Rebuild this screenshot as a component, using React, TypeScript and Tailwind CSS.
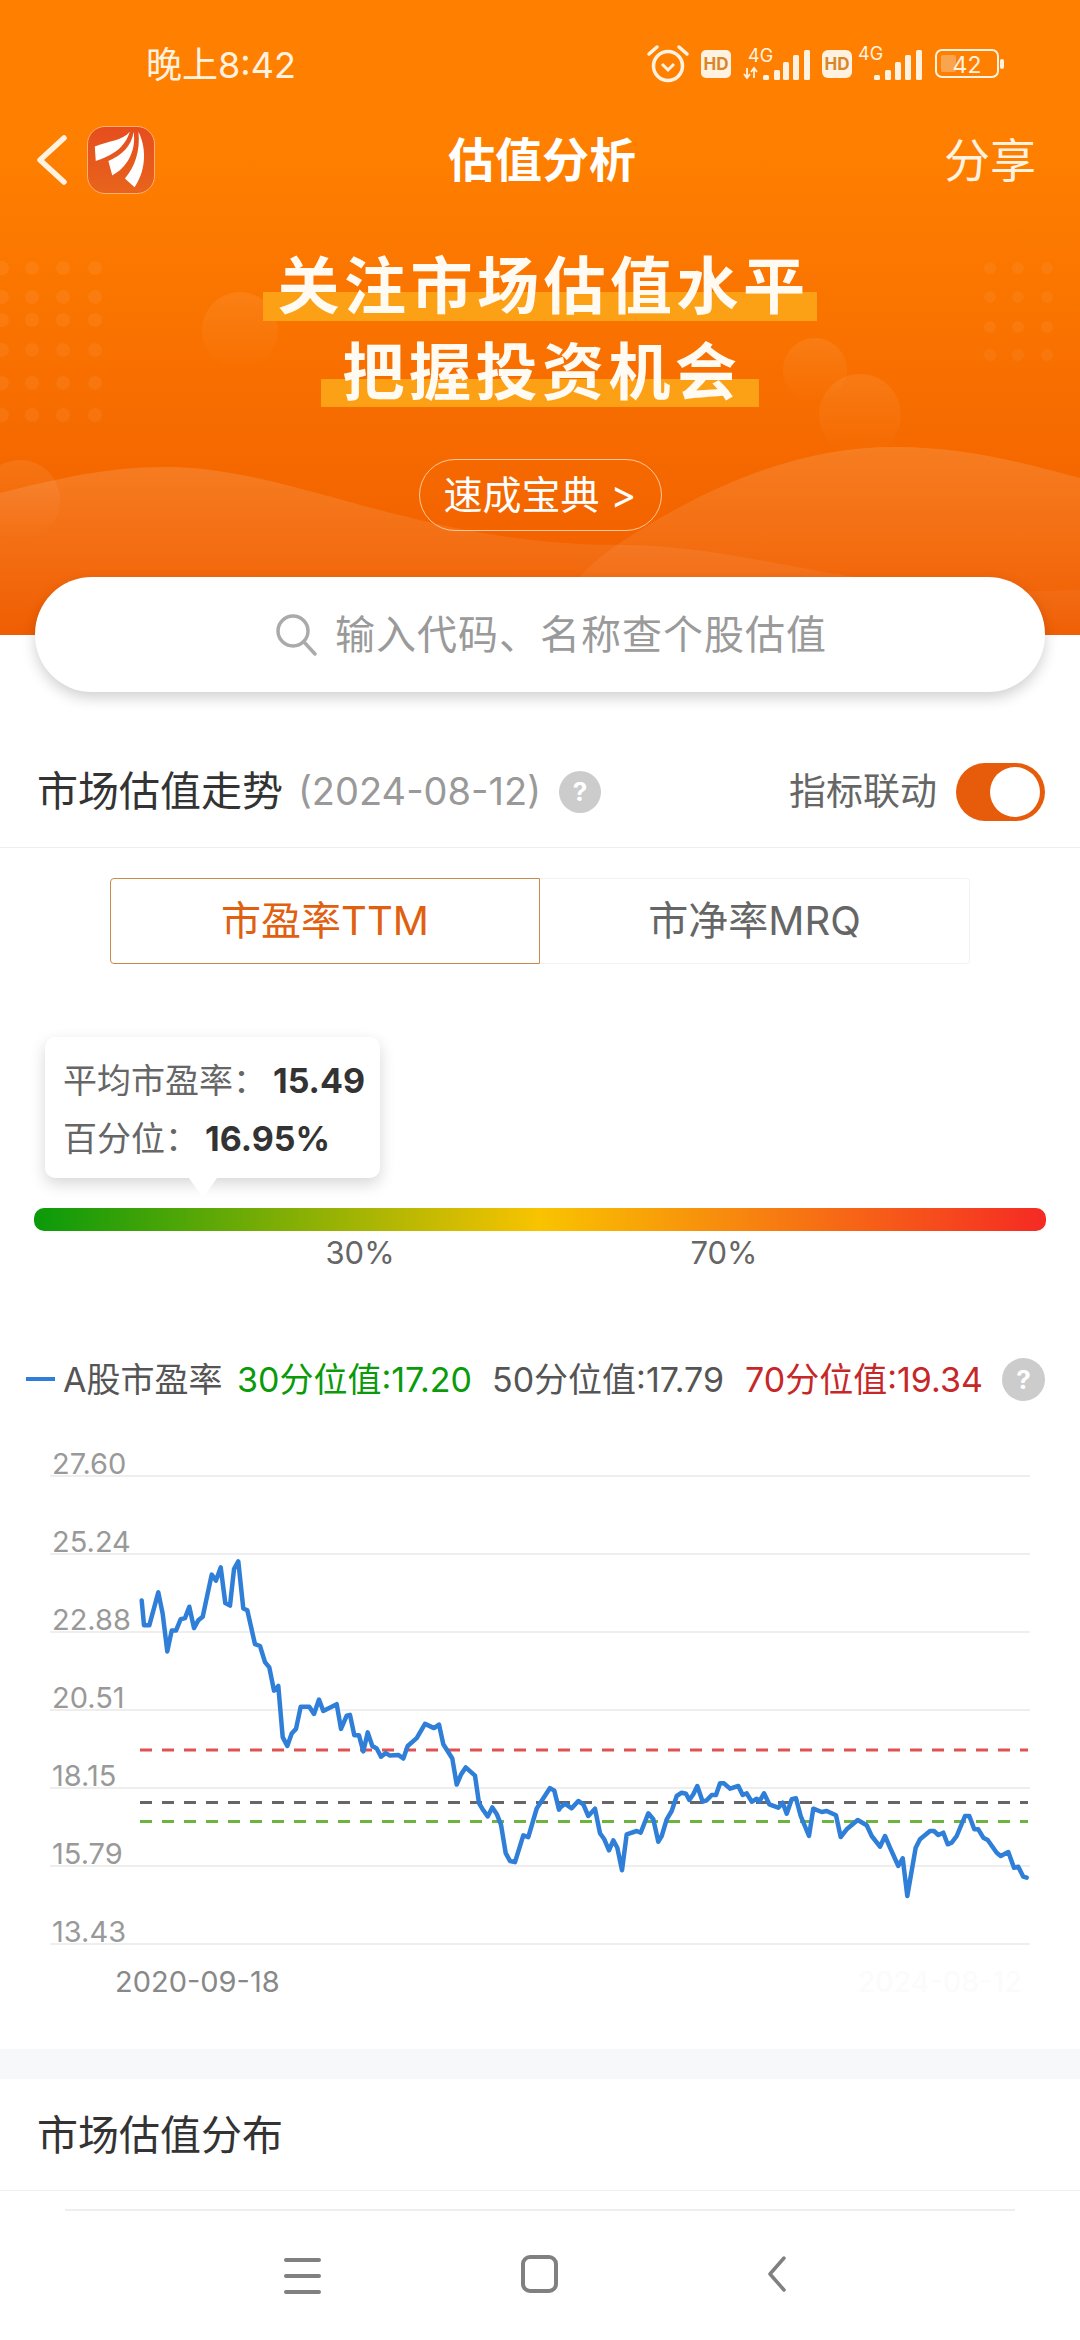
import React from "react";

const a: number[][] = [[65,503],[72,572],[88,572],[115,480],[128,540],[142,645],[155,587],[168,587],[182,555],[195,552],[208,520],[222,580],[235,558],[248,548],[275,430],[288,447],[302,410],[316,510],[330,517],[342,415],[355,393],[370,525],[382,530],[405,625],[420,630],[435,675],[448,690],[462,755],[475,742],[488,885],[502,910],[515,875],[528,862],[542,800],[568,800],[582,820],[597,780],[610,812],[650,793],[663,862],[680,825],[690,823],[703,880],[717,880],[730,925],[743,872],[757,910],[770,917],[783,940],[797,930],[810,937],[835,935],[850,945],[863,910],[890,888],[915,848],[942,860],[957,850],[970,905],[997,945],[1010,1018],[1023,990],[1037,970],[1065,993],[1077,1070],[1090,1090],[1103,1107],[1117,1082],[1130,1100],[1143,1130],[1157,1210],[1170,1232],[1185,1235],[1210,1160],[1225,1165],[1250,1085],[1290,1028],[1303,1035],[1317,1088]];
const b: number[][] = [[0,500],[15,488],[35,502],[55,480],[70,490],[85,525],[105,503],[120,577],[133,595],[147,628],[160,598],[172,620],[186,688],[200,580],[230,570],[242,575],[265,517],[280,535],[295,602],[305,585],[320,535],[335,510],[350,465],[365,455],[378,458],[388,477],[400,460],[412,435],[428,482],[440,478],[455,462],[468,462],[480,427],[492,427],[510,443],[535,435],[548,462],[560,457],[575,482],[590,473],[598,482],[612,457],[628,490],[655,500],[668,485],[680,518],[695,475],[708,472],[722,525],[747,585],[760,503],[785,513],[800,510],[828,523],[842,588],[860,565],[893,537],[920,553],[935,585],[960,617],[975,585],[990,620],[1015,675],[1028,652],[1042,765],[1067,620],[1080,595],[1110,570],[1122,570],[1135,582],[1150,575],[1163,610],[1175,605],[1190,585],[1215,525],[1228,525],[1243,565],[1255,565],[1270,590],[1283,597],[1310,635],[1322,645],[1345,633],[1362,680],[1375,677],[1390,707],[1400,710]];
const linePts = [
  ...a.map(([x, y]) => `${(120 + x / 3).toFixed(1)},${(1420 + y / 2.8).toFixed(1)}`),
  ...b.map(([x, y]) => `${(560 + x / 3).toFixed(1)},${(1640 + y / 3).toFixed(1)}`),
].join(" ");

const yLabels = ["27.60", "25.24", "22.88", "20.51", "18.15", "15.79", "13.43"];
const dotsL = [268, 297, 320, 350, 383, 415];
const dotsLx = [2, 32, 63, 95];
const dotsR = [268, 297, 327, 355];
const dotsRx = [990, 1018, 1047];

function Bars({ x }: { x: number[] }) {
  const tops = [55, 50, 42, 35, 30];
  return (
    <>
      {x.map((v, i) => (
        <rect key={i} x={v} y={tops[i]} width="6" height={60 - tops[i]} rx="1.5" fill="#fff2e0" />
      ))}
    </>
  );
}

function StatusIcons() {
  const c = "#fff2e0";
  return (
    <svg width="420" height="100" viewBox="0 0 420 100" className="mt-[20px]">
      <circle cx="48" cy="46" r="14.5" fill="none" stroke={c} strokeWidth="3.5" />
      <path d="M29 34 L37 27 M59 27 L67 34" stroke={c} strokeWidth="3.5" strokeLinecap="round" />
      <path d="M42 44 L48 50 L54 44" fill="none" stroke={c} strokeWidth="3" />
      <rect x="81" y="30" width="30" height="28" rx="5" fill={c} />
      <text x="96" y="50" textAnchor="middle" fontSize="17" fontWeight="700" fill="#d9862a">HD</text>
      <text x="128" y="42" fontSize="18" fill={c}>4G</text>
      <path d="M127 48 V58 M124 54 L127 58 L130 54 M134 58 V48 M131 52 L134 48 L137 52" stroke={c} strokeWidth="1.8" fill="none" />
      <Bars x={[143, 154, 163, 173, 184]} />
      <rect x="202" y="30" width="30" height="28" rx="6" fill={c} />
      <text x="217" y="50" textAnchor="middle" fontSize="17" fontWeight="700" fill="#d9862a">HD</text>
      <text x="238" y="40" fontSize="18" fill={c}>4G</text>
      <Bars x={[254, 265, 275, 285, 296]} />
      <rect x="316" y="30" width="62" height="27" rx="6" fill="none" stroke={c} strokeWidth="2" />
      <rect x="321" y="35" width="15" height="17" rx="2" fill="#f9a550" />
      <text x="347" y="53" textAnchor="middle" fontSize="23" fill={c}>42</text>
      <rect x="380" y="39" width="4" height="10" rx="2" fill={c} />
    </svg>
  );
}

function Help({ size }: { size: string }) {
  return (
    <div className={`${size} shrink-0 rounded-full bg-[#cccccc] flex items-center justify-center text-white text-[26px] font-bold`}>?</div>
  );
}

export default function App() {
  return (
    <div className="w-[1080px] h-[2340px] overflow-hidden bg-white flex flex-col font-['Inter','Noto_Sans_CJK_SC',sans-serif]">
      <header className="relative h-[635px] shrink-0 bg-[linear-gradient(to_bottom,#ff8000_0%,#ff8000_22%,#f05c00_100%)] overflow-hidden">
        <svg className="absolute inset-0" width="1080" height="635" viewBox="0 0 1080 635">
          <defs>
            <linearGradient id="w1" x1="0" y1="0" x2="0" y2="1">
              <stop offset="0" stopColor="#fff" stopOpacity="0.13" />
              <stop offset="1" stopColor="#fff" stopOpacity="0.01" />
            </linearGradient>
            <linearGradient id="w2" x1="0" y1="0" x2="0" y2="1">
              <stop offset="0" stopColor="#fff" stopOpacity="0.08" />
              <stop offset="1" stopColor="#fff" stopOpacity="0" />
            </linearGradient>
          </defs>
          <circle cx="240" cy="330" r="38" fill="url(#w2)" />
          <circle cx="860" cy="415" r="41" fill="url(#w2)" />
          <circle cx="815" cy="370" r="32" fill="url(#w2)" />
          <circle cx="20" cy="500" r="40" fill="url(#w2)" />
          {dotsL.map((y) => dotsLx.map((x) => <circle key={`${x}-${y}`} cx={x} cy={y} r="7" fill="#fff" fillOpacity="0.06" />))}
          {dotsR.map((y) => dotsRx.map((x) => <circle key={`${x}-${y}`} cx={x} cy={y} r="6" fill="#fff" fillOpacity="0.05" />))}
          <path d="M0 493 C60 478 110 466 172 467 C300 470 420 545 620 545 C760 545 860 600 1080 590 V635 H0 Z" fill="url(#w1)" />
          <path d="M545 635 C560 590 590 560 640 530 C730 475 810 447 895 447 C970 447 1030 465 1080 478 V635 Z" fill="url(#w1)" />
        </svg>

        <div className="relative flex flex-col items-center">
          <div className="w-full h-[125px] flex items-start justify-between pl-[146px] pr-[40px]">
            <span className="mt-[41px] text-[36px] leading-[48px] text-[#fff2e0]">晚上8:42</span>
            <StatusIcons />
          </div>
          <div className="w-full h-[70px] flex items-center">
            <svg width="30" height="50" viewBox="0 0 30 50" className="ml-[37px]">
              <path d="M27 3 L3 25 L27 47" fill="none" stroke="#fff2e0" strokeWidth="5.5" strokeLinecap="round" strokeLinejoin="round" />
            </svg>
            <div className="ml-[20px] w-[68px] h-[68px] rounded-[18px] border border-[#ffb070] bg-[linear-gradient(to_bottom,#e64d1e,#e8641c)]">
              <svg width="66" height="66" viewBox="0 0 68 68">
                <path d="M43 5 C36 14 20 15 7 20 L8 35 C24 30 38 22 43 5Z" fill="#fff" />
                <path d="M47 5 C45 20 34 30 21 35 L25 50 C40 42 50 25 47 5Z" fill="#fff" />
                <path d="M52 5 C54 25 48 42 38 53 L48 62 C58 48 62 25 52 5Z" fill="#fff" />
              </svg>
            </div>
            <span className="ml-[293px] w-[188px] text-[47px] leading-[60px] font-bold text-white whitespace-nowrap">估值分析</span>
            <span className="ml-[308px] text-[46px] leading-[60px] text-[#fff2e0] whitespace-nowrap">分享</span>
          </div>

          <div className="mt-[49px] pl-[14px] pr-[7px] h-[86px] text-[62px] leading-[86px] font-bold tracking-[4.5px] text-[#fffaf2] bg-[linear-gradient(to_bottom,transparent_56%,#fca016_56%,#fca016_90%,transparent_90%)] whitespace-nowrap">关注市场估值水平</div>
          <div className="pl-[21px] pr-[17px] h-[86px] text-[62px] leading-[86px] font-bold tracking-[4.5px] text-[#fffaf2] bg-[linear-gradient(to_bottom,transparent_57%,#fca016_57%,#fca016_90%,transparent_90%)] whitespace-nowrap">把握投资机会</div>

          <div className="mt-[43px] w-[243px] h-[72px] rounded-[36px] border border-[#ffc89a] flex items-center justify-center text-[39px] text-white whitespace-nowrap">速成宝典 &gt;</div>
        </div>
      </header>

      <div className="relative -mt-[58px] mx-[35px] h-[115px] shrink-0 rounded-[57px] bg-white shadow-[0_6px_14px_rgba(0,0,0,0.18)] flex items-center pl-[240px]">
        <svg width="44" height="44" viewBox="0 0 44 44">
          <circle cx="18" cy="18" r="15" fill="none" stroke="#aaaaaa" strokeWidth="3.5" />
          <path d="M29 29 L40 41" stroke="#aaaaaa" strokeWidth="3.5" strokeLinecap="round" />
        </svg>
        <span className="ml-[16px] text-[40px] tracking-[1px] text-[#9a9a9a] whitespace-nowrap">输入代码、名称查个股估值</span>
      </div>

      <div className="mt-[41px] h-[115px] shrink-0 border-b border-[#eeeeee] flex items-center pl-[37px] pr-[35px] pt-[3px]">
        <span className="w-[246px] text-[41px] text-[#333333] whitespace-nowrap">市场估值走势</span>
        <span className="ml-[15px] text-[38px] text-[#999999] whitespace-nowrap">(2024-08-12)</span>
        <div className="ml-auto"><Help size="w-[42px] h-[42px]" /></div>
        <span className="ml-[188px] text-[37px] text-[#666666] whitespace-nowrap">指标联动</span>
        <div className="ml-[19px] w-[89px] h-[58px] rounded-full bg-[#e65c0a] flex items-center justify-end pr-[5px]">
          <div className="w-[50px] h-[50px] rounded-full bg-white"></div>
        </div>
      </div>

      <div className="mt-[30px] ml-[110px] w-[860px] h-[86px] shrink-0 flex text-[40px]">
        <div className="w-[430px] h-full rounded-l-[4px] border border-[#c98a4b] flex items-center justify-center text-[#e0600f] whitespace-nowrap">市盈率TTM</div>
        <div className="flex-1 h-full rounded-r-[4px] border border-l-0 border-[#f2f2f2] flex items-center justify-center text-[#666666] whitespace-nowrap">市净率MRQ</div>
      </div>

      <div className="relative mt-[73px] ml-[45px] w-[335px] h-[141px] shrink-0 rounded-[10px] bg-white shadow-[0_6px_16px_rgba(0,0,0,0.16)] pl-[18px] pt-[15px] text-[#666666] text-[34px] leading-[58px]">
        <div className="flex whitespace-nowrap"><span>平均市盈率：</span><span className="ml-[6px] font-bold text-[#333333]">15.49</span></div>
        <div className="flex whitespace-nowrap"><span>百分位：</span><span className="ml-[6px] font-bold text-[#333333]">16.95%</span></div>
        <div className="absolute left-[144px] top-[141px] w-[28px] h-[20px] bg-white [clip-path:polygon(0_0,100%_0,50%_100%)]"></div>
      </div>

      <div className="mt-[30px] mx-[34px] h-[23px] shrink-0 rounded-[10px] bg-[linear-gradient(to_right,#0a9a0a_0%,#f9c300_50%,#f52a24_100%)]"></div>

      <div className="h-[44px] shrink-0 flex items-center text-[31px] text-[#666666]">
        <span className="ml-[300px] w-[120px] text-center">30%</span>
        <span className="ml-[244px] w-[120px] text-center">70%</span>
      </div>

      <div className="mt-[74px] h-[60px] shrink-0 flex items-center text-[34px] whitespace-nowrap">
        <div className="ml-[26px] w-[29px] h-[4px] bg-[#2f7ed8]"></div>
        <span className="ml-[8px] w-[174px] text-[#555555]">A股市盈率</span>
        <span className="w-[255px] text-[#0a9a0a]">30分位值:17.20</span>
        <span className="w-[253px] text-[#555555]">50分位值:17.79</span>
        <span className="w-[257px] text-[#c62828]">70分位值:19.34</span>
        <Help size="w-[43px] h-[43px]" />
      </div>

      <div className="relative shrink-0">
        <div className="mx-[50px] text-[29px] leading-[22px] text-[#999999]">
          {yLabels.map((l, i) => (
            <div key={l} className={`${i === 0 ? "h-[68px]" : "h-[78px]"} flex items-end border-b-2 border-[#eeeeee] pl-[2px]`}>{l}</div>
          ))}
        </div>
        <svg className="absolute left-0 top-0" width="1080" height="546" viewBox="0 1408 1080 546">
          <path d="M140 1749 H1028" stroke="#e05252" strokeWidth="3" strokeDasharray="12 10" />
          <path d="M140 1801.5 H1028" stroke="#666666" strokeWidth="3" strokeDasharray="12 10" />
          <path d="M140 1820.5 H1028" stroke="#6cb33f" strokeWidth="3" strokeDasharray="12 10" />
          <polyline points={linePts} fill="none" stroke="#2f7ed8" strokeWidth="4.5" strokeLinejoin="round" strokeLinecap="round" />
        </svg>
      </div>

      <div className="h-[74px] shrink-0 flex items-center justify-between pl-[115px] pr-[58px] text-[29px] text-[#888888]">
        <span>2020-09-18</span>
        <span className="text-[#fbfbfb]">2024-08-12</span>
      </div>

      <div className="mt-[30px] h-[30px] shrink-0 bg-[#f7f8fa]"></div>

      <div className="h-[112px] shrink-0 border-b border-[#eeeeee] flex items-center pl-[37px] pt-[3px] text-[41px] text-[#333333]">市场估值分布</div>

      <div className="mt-[18px] mx-[65px] h-[2px] shrink-0 bg-[#eeeeee]"></div>

      <div className="mt-[47px] pl-[284px] flex items-start">
        <div className="w-[37px] h-[36px] flex flex-col justify-between">
          <div className="h-[4px] rounded-full bg-[#808080]"></div>
          <div className="h-[4px] rounded-full bg-[#808080]"></div>
          <div className="h-[4px] rounded-full bg-[#808080]"></div>
        </div>
        <div className="ml-[200px] -mt-[3px] w-[37px] h-[38px] rounded-[9px] border-[4px] border-[#808080]"></div>
        <svg className="ml-[209px] -mt-[2px]" width="19" height="36" viewBox="0 0 19 36">
          <path d="M17 2 L3 18 L17 34" fill="none" stroke="#808080" strokeWidth="3.5" strokeLinecap="round" strokeLinejoin="round" />
        </svg>
      </div>
    </div>
  );
}
